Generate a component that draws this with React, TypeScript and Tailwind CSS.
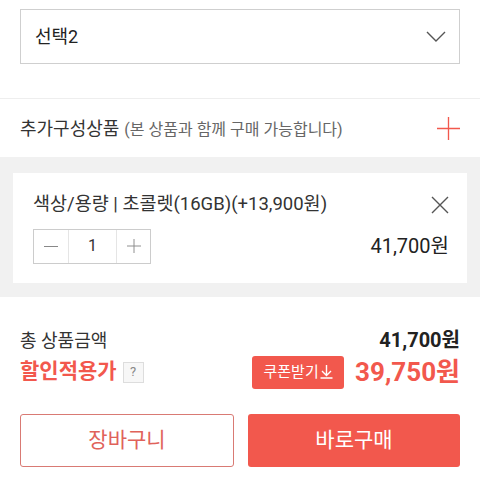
const RED = "#f2584d";

function Chevron() {
  return (
    <svg width="20" height="12" viewBox="0 0 20 12" fill="none" stroke="#555" strokeWidth="1.4">
      <path d="M1 1l9 9 9-9" />
    </svg>
  );
}

function Plus({ size = 24, color = RED, width = 1.6 }: { size?: number; color?: string; width?: number }) {
  return (
    <svg width={size} height={size} viewBox="0 0 24 24" fill="none" stroke={color} strokeWidth={width}>
      <path d="M12 0v24M0 12h24" />
    </svg>
  );
}

export default function App() {
  return (
    <div className="w-[480px] h-[480px] bg-white overflow-hidden font-['Roboto','Noto_Sans_CJK_KR',sans-serif] text-[#222]">
      {/* select */}
      <div className="px-5 pt-[9px] pb-[34px]">
        <div className="h-[55px] border border-[#cfcfcf] flex items-center justify-between pl-[14px] pr-[13px]">
          <span className="text-[18px]">선택2</span>
          <Chevron />
        </div>
      </div>

      {/* additional products */}
      <div className="border-t border-[#eee] h-[59px] px-5 flex items-center justify-between">
        <div className="flex items-baseline gap-[5px]">
          <span className="text-[18px] text-[#333]">추가구성상품</span>
          <span className="text-[16px] text-[#666]">(본 상품과 함께 구매 가능합니다)</span>
        </div>
        <Plus size={23} width={1.4} />
      </div>

      {/* selected option */}
      <div className="bg-[#f1f1f1] px-[13px] pt-[16px] pb-[14px]">
        <div className="bg-white h-[110px] pl-[20px] pr-[18px] pt-[18px]">
          <div className="flex items-center justify-between">
            <span className="text-[18.5px] text-[#333]">색상/용량 | 초콜렛(16GB)(+13,900원)</span>
            <svg width="18" height="18" viewBox="0 0 18 18" stroke="#555" strokeWidth="1.4">
              <path d="M1 1l16 16M17 1L1 17" />
            </svg>
          </div>
          <div className="flex items-center justify-between mt-[10px]">
            <div className="flex h-[35px] w-[118px] border border-[#ccc]">
              <div className="w-[35px] flex items-center justify-center border-r border-[#e5e5e5]">
                <div className="w-[14px] h-[1.5px] bg-[#888]" />
              </div>
              <div className="w-[48px] flex items-center justify-center text-[16px] text-[#333] border-r border-[#e5e5e5]">1</div>
              <div className="flex-1 flex items-center justify-center">
                <Plus size={14} color="#888" width={1.6} />
              </div>
            </div>
            <span className="text-[20px] text-[#222]">41,700원</span>
          </div>
        </div>
      </div>

      {/* totals */}
      <div className="px-5 pt-[29px]">
        <div className="flex items-center justify-between h-[28px]">
          <span className="text-[18px] text-[#333]">총 상품금액</span>
          <span className="text-[20px] font-bold text-[#222]">41,700원</span>
        </div>
        <div className="flex items-center justify-between h-[36px]">
          <div className="flex items-center gap-[6px]">
            <span className="text-[21px] font-bold" style={{ color: RED }}>할인적용가</span>
            <span className="w-[21px] h-[21px] border border-[#ddd] bg-[#f7f7f7] text-[#888] text-[13px] flex items-center justify-center">?</span>
          </div>
          <div className="flex items-center gap-[11px]">
            <span className="h-[33px] w-[92px] rounded-[3px] bg-[#f2584d] text-white text-[15px] flex items-center justify-center">
              쿠폰받기
              <svg width="13" height="14" viewBox="0 0 13 14" fill="none" stroke="white" strokeWidth="1.4" className="ml-[1px]">
                <path d="M6.5 0v10M2 6l4.5 4.5L11 6M0.5 13h12" />
              </svg>
            </span>
            <span className="text-[26px] font-bold" style={{ color: RED }}>39,750원</span>
          </div>
        </div>

        {/* buttons */}
        <div className="flex gap-[14px] mt-[24px]">
          <button className="flex-1 h-[53px] border border-[#d97a74] rounded-[3px] text-[21px] text-[#e0625a] bg-white">장바구니</button>
          <button className="flex-1 h-[53px] rounded-[3px] text-[21px] text-white bg-[#f2584d]">바로구매</button>
        </div>
      </div>
    </div>
  );
}
